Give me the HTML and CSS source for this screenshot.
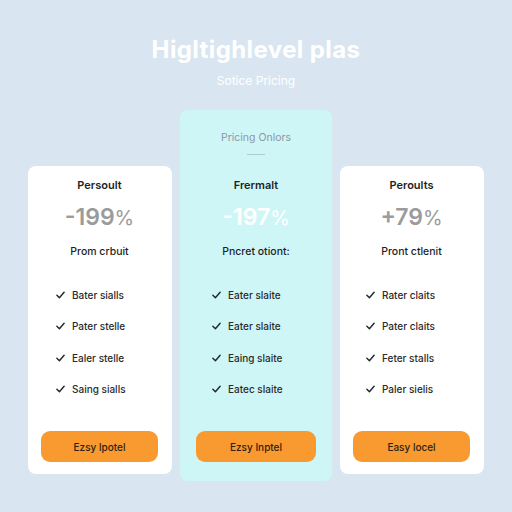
FILE: index.html
```html
<!DOCTYPE html>
<html>
<head>
<meta charset="utf-8">
<link rel="stylesheet" href="styles.css">
</head>
<body>
<header class="hero">
  <h1 class="title">Higltighlevel plas</h1>
  <p class="subtitle">Sotice Pricing</p>
</header>
<main class="plans">
  <section class="card side">
    <h2 class="name">Persoult</h2>
    <div class="price">-199<span class="pct">%</span></div>
    <p class="desc">Prom crbuit</p>
    <ul class="features">
      <li><svg class="check" viewBox="0 0 10 8"><path d="M1 4.2 L3.8 7 L9 1"/></svg>Bater sialls</li>
      <li><svg class="check" viewBox="0 0 10 8"><path d="M1 4.2 L3.8 7 L9 1"/></svg>Pater stelle</li>
      <li><svg class="check" viewBox="0 0 10 8"><path d="M1 4.2 L3.8 7 L9 1"/></svg>Ealer stelle</li>
      <li><svg class="check" viewBox="0 0 10 8"><path d="M1 4.2 L3.8 7 L9 1"/></svg>Saing sialls</li>
    </ul>
    <button class="cta">Ezsy lpotel</button>
  </section>
  <section class="card featured">
    <div class="feat-head">
      <p class="feat-label">Pricing Onlors</p>
      <div class="divider"></div>
    </div>
    <h2 class="name">Frermalt</h2>
    <div class="price light">-197<span class="pct">%</span></div>
    <p class="desc">Pncret otiont:</p>
    <ul class="features">
      <li><svg class="check" viewBox="0 0 10 8"><path d="M1 4.2 L3.8 7 L9 1"/></svg>Eater slaite</li>
      <li><svg class="check" viewBox="0 0 10 8"><path d="M1 4.2 L3.8 7 L9 1"/></svg>Eater slaite</li>
      <li><svg class="check" viewBox="0 0 10 8"><path d="M1 4.2 L3.8 7 L9 1"/></svg>Eaing slaite</li>
      <li><svg class="check" viewBox="0 0 10 8"><path d="M1 4.2 L3.8 7 L9 1"/></svg>Eatec slaite</li>
    </ul>
    <button class="cta">Ezsy Inptel</button>
  </section>
  <section class="card side">
    <h2 class="name">Peroults</h2>
    <div class="price">+79<span class="pct">%</span></div>
    <p class="desc">Pront ctlenit</p>
    <ul class="features">
      <li><svg class="check" viewBox="0 0 10 8"><path d="M1 4.2 L3.8 7 L9 1"/></svg>Rater claits</li>
      <li><svg class="check" viewBox="0 0 10 8"><path d="M1 4.2 L3.8 7 L9 1"/></svg>Pater claits</li>
      <li><svg class="check" viewBox="0 0 10 8"><path d="M1 4.2 L3.8 7 L9 1"/></svg>Feter stalls</li>
      <li><svg class="check" viewBox="0 0 10 8"><path d="M1 4.2 L3.8 7 L9 1"/></svg>Paler sielis</li>
    </ul>
    <button class="cta">Easy locel</button>
  </section>
</main>
</body>
</html>
```
FILE: styles.css
```css
* { box-sizing: border-box; }
html, body { margin: 0; padding: 0; }
body {
  width: 512px;
  height: 512px;
  background: #d9e6f1;
  font-family: Inter, "Open Sans", "Liberation Sans", sans-serif;
  overflow: hidden;
}
.hero {
  text-align: center;
  padding-top: 35px;
  height: 110px;
}
.title {
  margin: 0;
  font-size: 24px;
  line-height: 30px;
  font-weight: 700;
  color: #ffffff;
  letter-spacing: 0.4px;
}
.subtitle {
  margin: 8px 0 0;
  font-size: 12px;
  line-height: 15px;
  color: #ffffff;
}
.plans {
  display: grid;
  grid-template-columns: 144px 152px 144px;
  gap: 8px;
  justify-content: center;
  align-items: start;
}
.card {
  background: #ffffff;
  border-radius: 8px;
  display: flex;
  flex-direction: column;
  align-items: center;
  padding: 12px 14px 12px 13px;
}
.side { margin-top: 56px; height: 308px; }
.featured {
  background: #cff6f7;
  height: 371px;
  padding: 0 16px 19px;
}
.feat-head {
  height: 68px;
  display: flex;
  flex-direction: column;
  align-items: center;
  padding-top: 21px;
}
.feat-label {
  margin: 0;
  font-size: 10.5px;
  line-height: 14px;
  color: #8c98a4;
}
.divider {
  margin-top: 9px;
  width: 18px;
  height: 1px;
  background: #b2c9cf;
}
.name {
  margin: 0;
  font-size: 11px;
  line-height: 14px;
  font-weight: 600;
  color: #1e1e1e;
}
.price {
  margin-top: 12px;
  font-size: 23px;
  line-height: 26px;
  font-weight: 600;
  color: #9b9b9b;
}
.price .pct { font-weight: 400; font-size: 20px; }
.price.light { color: #ffffff; }
.desc {
  margin: 14px 0 0;
  font-size: 10.5px;
  line-height: 14px;
  font-weight: 500;
  color: #1e1e1e;
}
.features {
  list-style: none;
  margin: 29px 0 0;
  padding: 0;
  align-self: stretch;
  padding-left: 15px;
}
.featured .features { padding-left: 16px; }
.side:last-child .features { padding-left: 13px; }
.features li {
  display: flex;
  align-items: center;
  height: 14px;
  font-size: 10px;
  font-weight: 500;
  color: #2a2a2a;
  margin-bottom: 17.3px;
}
.check {
  width: 9px;
  height: 8px;
  margin-right: 7px;
  fill: none;
  stroke: #1e2a30;
  stroke-width: 1.6;
  stroke-linecap: round;
  stroke-linejoin: round;
}
.cta {
  margin-top: auto;
  align-self: stretch;
  height: 31px;
  border: none;
  border-radius: 9px;
  background: #f89a30;
  font-family: inherit;
  font-size: 10px;
  font-weight: 500;
  color: #2d2210;
}
```
